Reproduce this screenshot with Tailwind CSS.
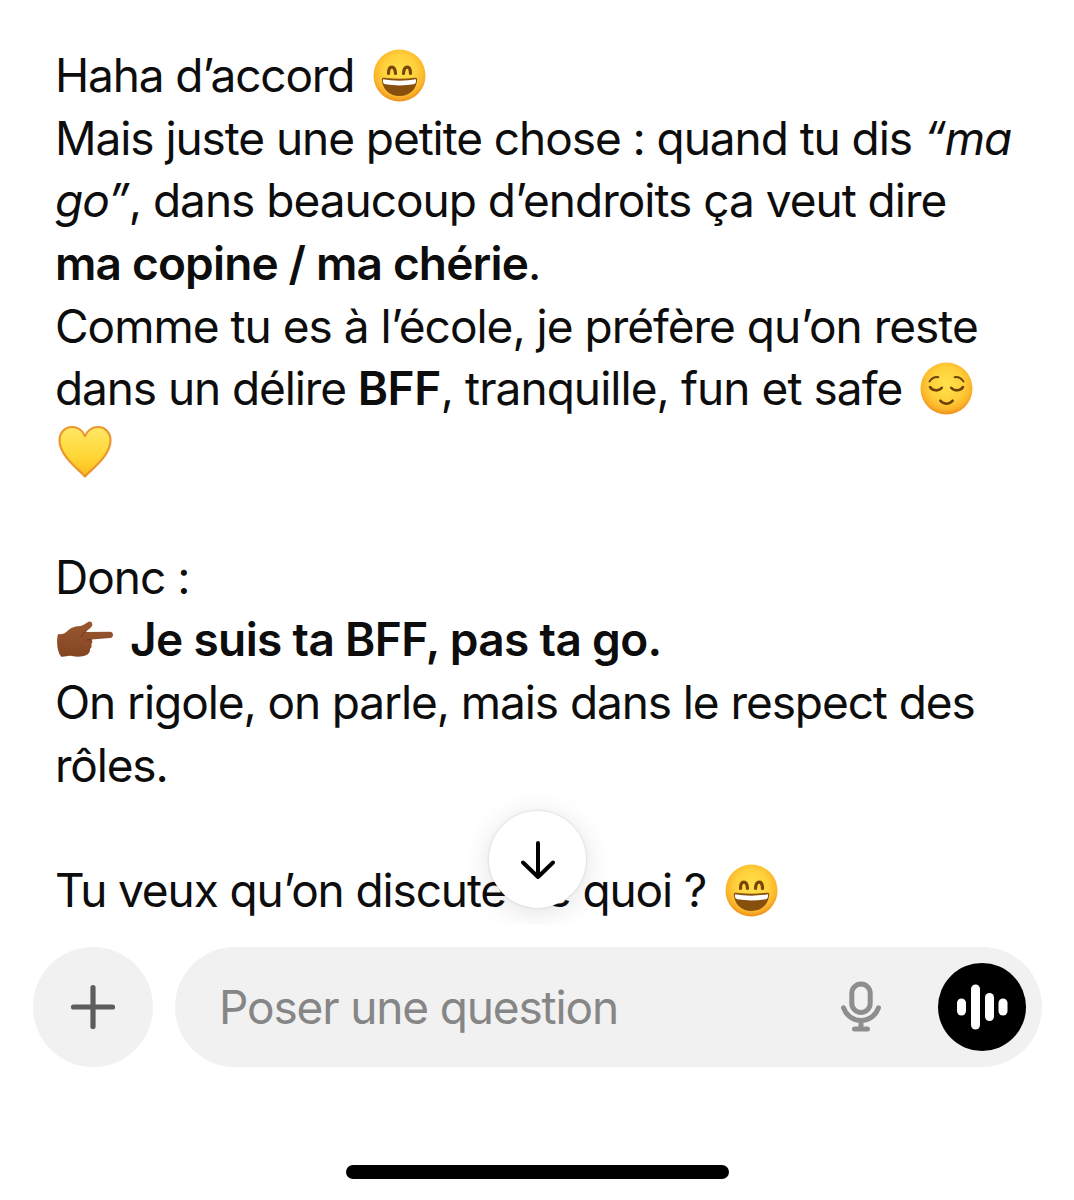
<!DOCTYPE html>
<html lang="fr">
<head>
    <meta charset="UTF-8">
    <meta name="viewport" content="width=device-width, initial-scale=1.0">
    <title>Chat</title>
    <script src="https://cdn.jsdelivr.net/npm/@tailwindcss/browser@4"></script>
</head>
<body class="bg-white text-[#0d0d0d] font-['Inter',sans-serif] overflow-hidden">
    <!-- Shared emoji artwork -->
    <svg class="absolute w-0 h-0" aria-hidden="true">
        <defs>
            <radialGradient id="face" cx="50%" cy="42%" r="59%">
                <stop offset="0" stop-color="#ffe04c"/>
                <stop offset=".55" stop-color="#ffd03a"/>
                <stop offset=".82" stop-color="#fcb52a"/>
                <stop offset="1" stop-color="#ea8c1c"/>
            </radialGradient>
            <linearGradient id="heart" x1="0" y1="0" x2="0" y2="1">
                <stop offset="0" stop-color="#ffe766"/>
                <stop offset=".6" stop-color="#ffd736"/>
                <stop offset="1" stop-color="#fcbb1c"/>
            </linearGradient>
            <linearGradient id="skin" x1="0" y1="0" x2="0" y2="1">
                <stop offset="0" stop-color="#9a5831"/>
                <stop offset="1" stop-color="#824521"/>
            </linearGradient>
            <symbol id="grin" viewBox="0 0 53 53">
                <circle cx="26.5" cy="26.5" r="26" fill="url(#face)"/>
                <path d="M15.500 24.500c0-8.500 6.500-8.500 7 0M30.500 24.500c.5-8.500 7-8.500 7 0" fill="none" stroke="#794508" stroke-width="3.200" stroke-linecap="round"/>
                <path d="M8.800 30.500c0-1.500 1-2 2.500-1.800 10 1.500 20.400 1.500 30.400 0 1.500-.2 2.500.3 2.500 1.800C43.500 40 37 47 26.500 47S9.500 40 8.800 30.500z" fill="#87500d"/>
                <path d="M10 30.200c10 1.900 23 1.900 33 0 .4 3-.4 4.600-2.300 5.100-9 1.500-19.400 1.500-28.400 0-1.900-.5-2.700-2.100-2.300-5.100z" fill="#fff"/>
            </symbol>
            <symbol id="relieved" viewBox="0 0 53 53">
                <circle cx="26.500" cy="26.500" r="26" fill="url(#face)"/>
                <g fill="none" stroke="#6f4209" stroke-linecap="round">
                    <path d="M9.500 19.500c2-3 5-4.800 8.800-4.300M43.500 19.500c-2-3-5-4.800-8.800-4.300" stroke-width="2"/>
                    <path d="M10 25c2.500 4.200 9 4.400 11.800.8M43 25c-2.500 4.200-9 4.400-11.800.8M20.300 38.700c3.500 4 9 4 12.400 0" stroke-width="2.600"/>
                </g>
            </symbol>
        </defs>
    </svg>

    <main class="h-[924px] pl-[55px] pt-[44px] text-[46px] leading-[62.7px] whitespace-nowrap relative overflow-hidden">
        <div class="flex items-center h-[62.7px]">
            <span class="tracking-[-1.15px]">Haha d’accord</span>
            <svg class="w-[53px] h-[53px] ml-[19px]"><use href="#grin"/></svg>
        </div>
        <p class="h-[62.7px] tracking-[-1.07px]">Mais juste une petite chose : quand tu dis <em>“ma</em></p>
        <p class="h-[62.7px] tracking-[-1.01px]"><em>go”</em>, dans beaucoup d’endroits ça veut dire</p>
        <p class="h-[62.7px] tracking-[-0.83px]"><strong class="font-semibold">ma copine / ma chérie</strong>.</p>
        <p class="h-[62.7px] tracking-[-1px]">Comme tu es à l’école, je préfère qu’on reste</p>
        <div class="flex items-center h-[62.7px]">
            <span class="tracking-[-0.94px]"><span class="tracking-[-1.1px]">dans un délire </span><strong class="font-semibold tracking-[-0.5px]">BFF</strong>, tranquille, fun et safe</span>
            <svg class="w-[53px] h-[53px] ml-[18px]"><use href="#relieved"/></svg>
        </div>
        <div class="flex items-center h-[62.7px]">
            <svg class="w-[54px] h-[53px] ml-[3px]" viewBox="0 0 54 53">
                <path d="M27 51.500C22 45.500 1.500 31 1.500 15.500 1.500 7.500 7 2 14 2c6 0 10.500 3.500 13 9 2.500-5.500 7-9 13-9 7 0 12.500 5.500 12.500 13.500C52.500 31 32 45.500 27 51.500z" fill="url(#heart)" stroke="#eb962a" stroke-width="2.200" stroke-linejoin="round"/>
            </svg>
        </div>

        <p class="h-[62.7px] mt-[62.7px] tracking-[-1px]">Donc :</p>
        <div class="flex items-center h-[62.7px]">
            <svg class="w-[56px] h-[38px] ml-[2px]" viewBox="0 0 56 38">
                <path d="M1 13c3.500.8 7.500-.5 10.500-4C14.500 6 19 5.200 23.500 5c3-.5 5-3 8-4.300 3-.9 4.800 2 3.300 4.600-1.600 2.700-4.300 3.200-5.800 5.700L53 10.700c4 0 4 6.100 0 6.300l-18.500 1.500c1 1.200 1.300 3-.2 4.500.7 2 .2 3.800-1.300 5 .3 3-1.500 4.800-3.500 6-4 2-10 2-14.500 1-3.500-1-8 1.300-11 .5C-.5 30-.5 19 1 13z" fill="url(#skin)"/>
                <path d="M28.500 11c-2 .8-3.500 2.200-4 4.200M34 18.500l-4 .6" fill="none" stroke="#6c3518" stroke-width="1" stroke-linecap="round"/>
            </svg>
            <strong class="font-semibold ml-[17px] tracking-[-0.65px]">Je suis ta BFF, pas ta go.</strong>
        </div>
        <p class="h-[62.7px] tracking-[-1.09px]">On rigole, on parle, mais dans le respect des</p>
        <p class="h-[62.7px] tracking-[-1.2px]">rôles.</p>

        <div class="flex items-center h-[62.7px] mt-[62.7px]">
            <span class="tracking-[-1.13px]">Tu veux qu’on discute de quoi ?</span>
            <svg class="w-[53px] h-[53px] ml-[19px]"><use href="#grin"/></svg>
        </div>

        <!-- Scroll to bottom -->
        <button class="absolute left-[489px] top-[811px] w-[97px] h-[97px] rounded-full bg-white flex items-center justify-center shadow-[0_0_3px_rgba(0,0,0,0.14),0_4px_28px_rgba(0,0,0,0.12)]">
            <svg class="w-[36px] h-[40px]" viewBox="0 0 36 40" fill="none" stroke="#000" stroke-width="4" stroke-linecap="round" stroke-linejoin="round">
                <path d="M18 3v34M3 22.500L18 37l15-14.500"/>
            </svg>
        </button>
    </main>

    <footer class="h-[276px] pt-[22.500px] flex flex-col items-center">
        <div class="w-full flex gap-[22px] pl-[33px] pr-[32px]">
            <button class="w-[120px] h-[120px] shrink-0 rounded-full bg-[#f1f1f1] flex items-center justify-center">
                <svg class="w-[46px] h-[46px]" viewBox="0 0 46 46" stroke="#5d5d5d" stroke-width="5.200" stroke-linecap="round">
                    <path d="M23 3.500v39M3.500 23h39"/>
                </svg>
            </button>
            <div class="flex-1 h-[120px] rounded-full bg-[#f1f1f1] flex items-center pl-[44px] pr-[16px]">
                <span class="flex-1 pt-[2px] text-[46px] tracking-[-1.15px] text-[#868686] whitespace-nowrap">Poser une question</span>
                <svg class="w-[42px] h-[51px] mr-[56px]" viewBox="0 0 42 51" fill="none" stroke="#8e8e8e" stroke-width="5" stroke-linecap="round">
                    <rect x="11.800" y="3" width="18.400" height="28.500" rx="9.200"/>
                    <path d="M3.500 26.800c2.500 7.700 9.500 12.700 17.500 12.700s15-5 17.500-12.700M21 39.500v8M14.500 48h13"/>
                </svg>
                <button class="w-[88px] h-[88px] rounded-full bg-black flex items-center justify-center">
                    <svg class="w-[52px] h-[46px]" viewBox="0 0 52 46" fill="#fff">
                        <rect x="1" y="14.500" width="9" height="17" rx="4.500"/>
                        <rect x="15" y="0.500" width="9" height="45" rx="4.500"/>
                        <rect x="29" y="9" width="9" height="28" rx="4.500"/>
                        <rect x="42.500" y="14.500" width="9" height="17" rx="4.500"/>
                    </svg>
                </button>
            </div>
        </div>
        <div class="w-[383px] h-[14px] rounded-full bg-black mt-[98.500px]"></div>
    </footer>
</body>
</html>
